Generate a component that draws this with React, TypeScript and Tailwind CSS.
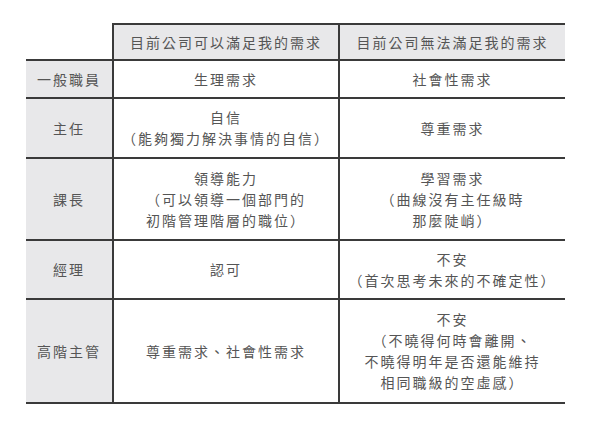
import React from "react";

const rows: { label: string; can: string[]; cannot: string[]; h: string }[] = [
  { label: "一般職員", can: ["生理需求"], cannot: ["社會性需求"], h: "h-[38px]" },
  {
    label: "主任",
    can: ["自信", "（能夠獨力解決事情的自信）"],
    cannot: ["尊重需求"],
    h: "h-[60px]",
  },
  {
    label: "課長",
    can: ["領導能力", "（可以領導一個部門的", "初階管理階層的職位）"],
    cannot: ["學習需求", "（曲線沒有主任級時", "那麼陡峭）"],
    h: "h-[82px]",
  },
  {
    label: "經理",
    can: ["認可"],
    cannot: ["不安", "（首次思考未來的不確定性）"],
    h: "h-[59px]",
  },
  {
    label: "高階主管",
    can: ["尊重需求、社會性需求"],
    cannot: ["不安", "（不曉得何時會離開、", "不曉得明年是否還能維持", "相同職級的空虛感）"],
    h: "h-[104px]",
  },
];

function Lines({ lines }: { lines: string[] }) {
  return (
    <div className="flex flex-col items-center leading-[21px]">
      {lines.map((l, i) => (
        <span key={i}>{l}</span>
      ))}
    </div>
  );
}

export default function App() {
  return (
    <div
      className="w-[600px] h-[437px] bg-white pt-[23px] pl-[26px] text-[14px] tracking-[2px] text-[#555]"
      style={{ fontFamily: '"Noto Sans CJK TC", "Noto Sans", sans-serif' }}
    >
      <div className="grid grid-cols-[88px_226px_225px] w-[539px]">
        {/* header */}
        <div className="h-[38px] border-b-2 border-r-2 border-[#3a3a3a] bg-white" />
        <div className="h-[38px] border-t-2 border-b-2 border-r-2 border-[#3a3a3a] bg-[#e8e8ea] flex items-center justify-center">
          目前公司可以滿足我的需求
        </div>
        <div className="h-[38px] border-t-2 border-b-2 border-[#3a3a3a] bg-[#e8e8ea] flex items-center justify-center">
          目前公司無法滿足我的需求
        </div>

        {rows.map((r) => (
          <React.Fragment key={r.label}>
            <div
              className={`${r.h} border-b-2 border-r-2 border-[#3a3a3a] bg-[#e8e8ea] flex items-center justify-center`}
            >
              {r.label}
            </div>
            <div
              className={`${r.h} border-b-2 border-r-2 border-[#3a3a3a] flex items-center justify-center`}
            >
              <Lines lines={r.can} />
            </div>
            <div className={`${r.h} border-b-2 border-[#3a3a3a] flex items-center justify-center`}>
              <Lines lines={r.cannot} />
            </div>
          </React.Fragment>
        ))}
      </div>
    </div>
  );
}
